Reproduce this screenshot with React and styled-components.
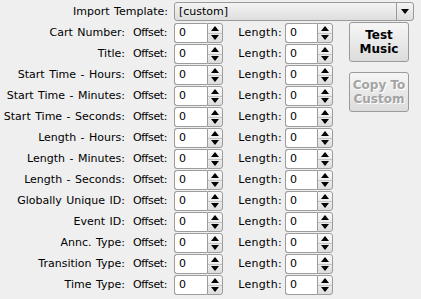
import React from 'react';
import styled, { createGlobalStyle } from 'styled-components';

const Global = createGlobalStyle`
  html, body { margin: 0; padding: 0; background: #efefef; }
  body { font-family: "DejaVu Sans", "Liberation Sans", sans-serif; font-size: 11px; color: #000; word-spacing: 1px; }
`;

const Page = styled.div`
  width: 421px;
  height: 299px;
  box-sizing: border-box;
  padding-top: 2px;
  background: #efefef;
  overflow: hidden;
`;

const TopRow = styled.div`
  display: flex;
  align-items: center;
  height: 19px;
`;

const TopLabel = styled.div`
  width: 174px;
  box-sizing: border-box;
  padding-right: 6px;
  text-align: right;
  white-space: nowrap;
`;

const Combo = styled.div`
  width: 240px;
  height: 19px;
  box-sizing: border-box;
  display: flex;
  border: 1px solid #9a9a9a;
  border-radius: 3px;
  background: linear-gradient(#f4f4f4, #dedede);
`;

const ComboText = styled.div`
  flex: 1;
  padding-left: 4px;
  line-height: 17px;
`;

const ComboArrow = styled.div`
  width: 16px;
  border-left: 1px solid #9a9a9a;
  display: flex;
  align-items: center;
  justify-content: center;
`;

const Body = styled.div`
  display: flex;
  margin-top: 2px;
`;

const FormGrid = styled.div`
  display: grid;
  grid-template-columns: 128px 46px 49px 62px 48px;
  grid-auto-rows: 20px;
  row-gap: 1px;
`;

const Label = styled.div`
  text-align: right;
  padding-right: ${(p) => p.$pad}px;
  letter-spacing: ${(p) => p.$track || 0}px;
  line-height: 20px;
  white-space: nowrap;
`;

const Spin = styled.div`
  display: flex;
  height: 20px;
`;

const SpinField = styled.div`
  flex: 1;
  background: #fff;
  border: 1px solid #9c9c9c;
  border-right: none;
  border-radius: 3px 0 0 3px;
  padding-left: 4px;
  line-height: 18px;
`;

const SpinButtons = styled.div`
  width: 16px;
  box-sizing: border-box;
  border: 1px solid #9c9c9c;
  border-radius: 0 3px 3px 0;
  background: linear-gradient(#fafafa, #dedede);
  display: flex;
  flex-direction: column;
`;

const SpinHalf = styled.div`
  flex: 1;
  display: flex;
  align-items: center;
  justify-content: center;
  border-top: ${(p) => (p.$lower ? '1px solid #c4c4c4' : 'none')};
`;

const ButtonCol = styled.div`
  display: flex;
  flex-direction: column;
  gap: 10px;
  margin-left: 16px;
  margin-top: -1px;
`;

const Button = styled.button`
  width: 60px;
  height: 40px;
  padding: 0;
  box-sizing: border-box;
  border: 1px solid #9a9a9a;
  border-radius: 3px;
  background: linear-gradient(#f6f6f6, #dcdcdc);
  font-family: "DejaVu Sans", "Liberation Sans", sans-serif;
  font-weight: bold;
  font-size: 12px;
  line-height: 14px;
  word-spacing: 0;
  color: ${(p) => (p.$disabled ? '#a4a4a4' : '#000')};
  text-shadow: ${(p) => (p.$disabled ? '1px 1px 0 #fff' : 'none')};
`;

const Up = () => (
  <svg width="8" height="5" viewBox="0 0 8 5">
    <polygon points="0,5 8,5 4,0" fill="#000" />
  </svg>
);
const Down = () => (
  <svg width="8" height="5" viewBox="0 0 8 5">
    <polygon points="0,0 8,0 4,5" fill="#000" />
  </svg>
);

const SpinBox = ({ value }) => (
  <Spin>
    <SpinField>{value}</SpinField>
    <SpinButtons>
      <SpinHalf><Up /></SpinHalf>
      <SpinHalf $lower><Down /></SpinHalf>
    </SpinButtons>
  </Spin>
);

const rows = [
  'Cart Number:',
  'Title:',
  'Start Time - Hours:',
  'Start Time - Minutes:',
  'Start Time - Seconds:',
  'Length - Hours:',
  'Length - Minutes:',
  'Length - Seconds:',
  'Globally Unique ID:',
  'Event ID:',
  'Annc. Type:',
  'Transition Type:',
  'Time Type:',
];

export default function App() {
  return (
    <Page>
      <Global />
      <TopRow>
        <TopLabel>Import Template:</TopLabel>
        <Combo>
          <ComboText>[custom]</ComboText>
          <ComboArrow><Down /></ComboArrow>
        </Combo>
      </TopRow>
      <Body>
        <FormGrid>
          {rows.map((r) => (
            <React.Fragment key={r}>
              <Label $pad={3}>{r}</Label>
              <Label $pad={7} $track={-0.4}>Offset:</Label>
              <SpinBox value="0" />
              <Label $pad={3} $track={0.3}>Length:</Label>
              <SpinBox value="0" />
            </React.Fragment>
          ))}
        </FormGrid>
        <ButtonCol>
          <Button>Test<br />Music</Button>
          <Button $disabled disabled>Copy To<br />Custom</Button>
        </ButtonCol>
      </Body>
    </Page>
  );
}
